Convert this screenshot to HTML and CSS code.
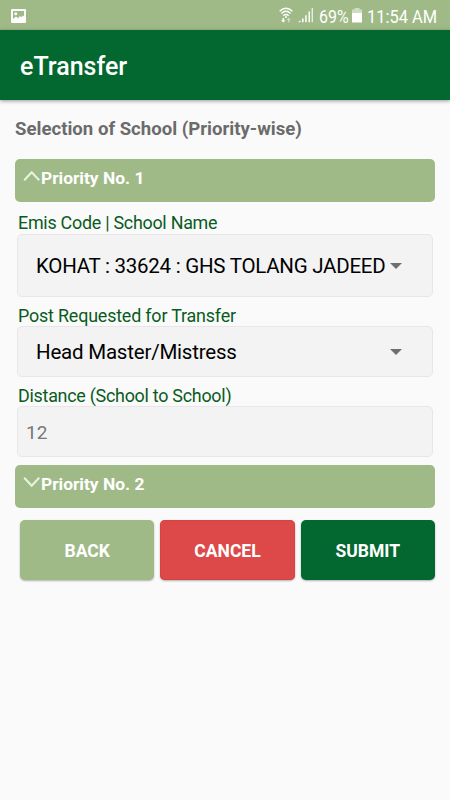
FILE: index.html
```html
<!DOCTYPE html>
<html lang="en">
<head>
<meta charset="utf-8">
<title>eTransfer</title>
<link rel="stylesheet" href="styles.css">
</head>
<body>
<div class="statusbar">
  <svg class="picture" width="15" height="14" viewBox="0 0 15 14"><path fill="#fff" fill-rule="evenodd" d="M1 0h13q1 0 1 1v12q0 1-1 1H1q-1 0-1-1V1q0-1 1-1zM2 2v8l3-2.5 2 1.7 2-2.2 1.5 1.3L12 6.5l1 1V2z"/><circle cx="4.7" cy="4.7" r="1.5" fill="#fff"/></svg>
  <svg class="wifi" width="14" height="16" viewBox="0 0 14 16" fill="none" stroke="#fff" stroke-width="1.4"><path d="M.6 4.2Q7-1.8 13.4 4.2M2.4 6.5Q7 2.2 11.6 6.5M4.3 8.7Q7 6.4 9.7 8.7"/><circle cx="7" cy="10" r="1" fill="#fff" stroke="none"/><path fill="#fff" stroke="none" d="M3.5 11h1.6v2.3h1.4L4.3 15.5 2 13.3h1.5z"/><path fill="#fff" stroke="none" opacity=".5" d="M8.9 15.3h1.6V13h1.4L9.7 10.6 7.5 13h1.4z"/></svg>
  <svg class="signal" width="16" height="16" viewBox="0 0 16 16" fill="#fff"><path d="M0 15.3l2.5-2v2zM4 11.5h1.6v3.8H4zM7.2 8.3h1.5v7H7.2zM10.5 4.5H12v10.8h-1.5z"/><path opacity=".75" d="M13.6 1H15v14.3h-1.4z"/></svg>
  <span class="percent"><span class="narrow">69%</span></span>
  <svg class="battery" width="10" height="16" viewBox="0 0 10 16"><path fill="#fff" opacity=".5" d="M2.5 1h5v1.5H10V6H0V2.5h2.5z"/><path fill="#fff" d="M0 6h10v9.5H0z"/></svg>
  <span class="clock"><span class="narrow">11:54 AM</span></span>
</div>
<header class="appbar"><span class="app-title">eTransfer</span></header>
<main>
  <h1><span>Selection of School (Priority-wise)</span></h1>
  <section class="panel-title"><svg class="chevron" width="18" height="12" viewBox="0 0 18 12"><path d="M1.2 10.2L8.7 2.3l7.5 7.9"/></svg><span>Priority No. 1</span></section>
  <div class="form">
    <label class="label-school">Emis Code | School Name</label>
    <div class="field school"><span class="value">KOHAT : 33624 : GHS TOLANG JADEED</span><i class="arrow"></i></div>
    <label class="label-post">Post Requested for Transfer</label>
    <div class="field post"><span class="value">Head Master/Mistress</span><i class="arrow"></i></div>
    <label class="label-distance">Distance (School to School)</label>
    <div class="field distance"><span>12</span></div>
  </div>
  <section class="panel-title second"><svg class="chevron" width="18" height="12" viewBox="0 0 18 12"><path d="M1.2 1.8l7.5 7.9 7.5-7.9"/></svg><span>Priority No. 2</span></section>
  <div class="actions">
    <button class="back">BACK</button>
    <button class="cancel">CANCEL</button>
    <button class="submit">SUBMIT</button>
  </div>
</main>
</body>
</html>
```

FILE: styles.css
```css
* { box-sizing: border-box; }
body { margin: 0; height: 800px; background: #fafafa; font-family: Roboto, sans-serif; overflow: hidden; }
svg { display: block; flex: none; }
.statusbar { height: 30px; background: #9fba87; color: #fff; display: flex; align-items: center; padding-left: 11px; }
.picture { margin: 1px 253px 0 0; }
.wifi { margin-right: 5px; }
.signal { margin-right: 5px; }
.percent { width: 33px; }
.battery { margin-right: 5px; }
.percent, .clock { font-size: 18.5px; line-height: 30px; white-space: nowrap; padding-top: 3px; }
.clock { width: 80px; }
.narrow { display: inline-block; transform: scaleX(.86); transform-origin: 0 50%; }
.clock .narrow { transform: scaleX(.89); }
.appbar { height: 70px; background: #03682f; color: #fff; display: flex; align-items: center; padding: 2px 0 0 20px; box-shadow: 0 1px 4px rgba(0,0,0,.4); }
.app-title { font-size: 25px; font-weight: 500; }
main { padding: 17px 15px 0; }
h1 { margin: 0 0 17px; height: 25px; line-height: 25px; font-size: 18.6px; font-weight: 700; color: #6b6b6b; white-space: nowrap; }
.panel-title { height: 43px; border-radius: 5px; background: #9fba87; color: #fff; display: flex; padding: 0 0 0 8px; font-size: 17.4px; line-height: 39px; font-weight: 700; }
.chevron { margin: 11px 0 0; fill: none; stroke: #e9f3e0; stroke-width: 2; }
.form { padding: 11px 2px 8px; }
label { display: block; height: 21px; line-height: 21px; padding-left: 1px; font-size: 17.9px; letter-spacing: -.26px; color: #095b1d; white-space: nowrap; }
.label-school { line-height: 20px; }
.label-post { letter-spacing: -.18px; }
.field { border: 1px solid #e7e7e7; border-radius: 5px; background: #f3f3f3; display: flex; align-items: center; color: #000; font-size: 20.5px; white-space: nowrap; }
.school { height: 63px; margin-bottom: 8px; padding-left: 18px; letter-spacing: -.25px; }
.post { height: 51px; margin-bottom: 8px; padding: 1px 0 0 18px; letter-spacing: -.21px; }
.distance { height: 51px; padding: 1px 0 0 8px; color: #777; font-size: 19px; }
.value { width: 354px; }
.arrow { border: 6px solid transparent; border-top-color: #6e6e6e; border-bottom: 0; }
.actions { display: flex; gap: 6px; padding: 12px 0 0 5px; }
button { flex: 1; height: 60px; border: 0; border-radius: 5px; padding: 2px 0 0; font: 700 17.5px Roboto, sans-serif; color: #fff; box-shadow: 0 1px 2px rgba(0,0,0,.3); }
.back { background: #9fba87; }
.cancel { background: #dd4949; box-shadow: inset 0 0 1px #c00000, 0 1px 2px rgba(0,0,0,.3); }
.submit { background: #03682f; }
```
